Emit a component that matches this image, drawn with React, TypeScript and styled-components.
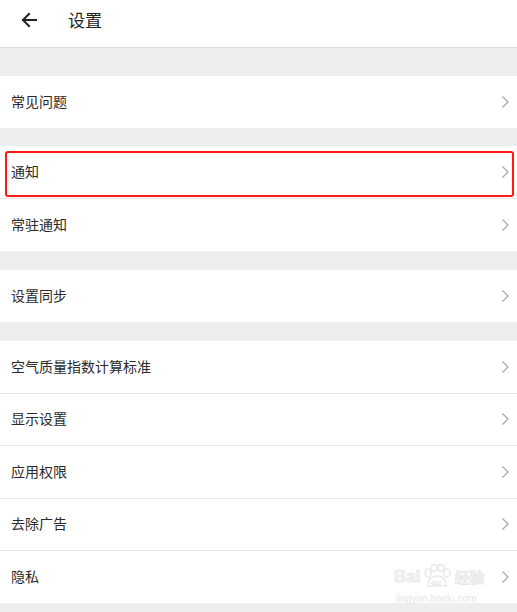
import React from 'react';
import styled, { createGlobalStyle } from 'styled-components';

const GlobalStyle = createGlobalStyle`
  html, body {
    margin: 0;
    padding: 0;
    background: #eeeeee;
    font-family: "Noto Sans CJK SC", "Noto Sans", Roboto, sans-serif;
  }
`;

const groups: { gap: number; items: string[] }[] = [
  { gap: 28, items: ['常见问题'] },
  { gap: 18, items: ['通知', '常驻通知'] },
  { gap: 19, items: ['设置同步'] },
  { gap: 19, items: ['空气质量指数计算标准', '显示设置', '应用权限', '去除广告', '隐私'] },
];

function Chevron() {
  return (
    <svg width='9' height='14' viewBox='0 0 9 14'>
      <path d='M1.5 1.5 L7 7 L1.5 12.5' fill='none' stroke='#a8a8a8' strokeWidth='1.3' />
    </svg>
  );
}

function BackArrow() {
  return (
    <svg width='16' height='16' viewBox='0 0 16 16'>
      <path
        d='M15 8 H2 M8 2 L2 8 L8 14'
        fill='none'
        stroke='#222'
        strokeWidth='2'
        strokeLinecap='square'
      />
    </svg>
  );
}

function Watermark() {
  return (
    <Mark>
      <MarkTop>
        <span>Bai</span>
        <svg width='30' height='26' viewBox='0 0 30 26'>
          <g fill='none' stroke='#e8e8e8' strokeWidth='1.5'>
            <ellipse cx='6' cy='9' rx='3' ry='4' />
            <ellipse cx='12' cy='4' rx='3' ry='3.5' />
            <ellipse cx='19' cy='4' rx='3' ry='3.5' />
            <ellipse cx='25' cy='9' rx='3' ry='4' />
            <path d='M6 22 C6 14 10 12 15 12 C20 12 24 14 24 22 Z' />
          </g>
          <text x='9' y='21' fontSize='8' fill='#e8e8e8' fontFamily='Liberation Sans'>
            du
          </text>
        </svg>
        <span>经验</span>
      </MarkTop>
      <MarkUrl>jingyan.baidu.com</MarkUrl>
    </Mark>
  );
}

export default function App() {
  return (
    <Page>
      <GlobalStyle />
      <Header>
        <BackButton>
          <BackArrow />
        </BackButton>
        <Title>设置</Title>
      </Header>
      {groups.map((group, gi) => (
        <Group key={gi} $gap={group.gap}>
          {group.items.map((label) => (
            <Row key={label}>
              <Label>{label}</Label>
              <Chevron />
              {label === '通知' && <Highlight />}
              {label === '隐私' && <Watermark />}
            </Row>
          ))}
        </Group>
      ))}
    </Page>
  );
}

const Page = styled.div`
  width: 517px;
  height: 612px;
  overflow: hidden;
  background: #eeeeee;
`;

const Header = styled.div`
  display: flex;
  align-items: center;
  height: 47px;
  background: #ffffff;
  border-bottom: 1px solid #dcdcdc;
`;

const BackButton = styled.div`
  display: flex;
  align-items: center;
  padding-left: 21px;
  width: 47px;
  box-sizing: border-box;
  margin-top: -7px;
`;

const Title = styled.div`
  font-size: 17px;
  color: #222;
  margin-left: 21px;
  margin-top: -8px;
`;

const Group = styled.div<{ $gap: number }>`
  margin-top: ${(p) => p.$gap}px;
  background: #ffffff;
`;

const Row = styled.div`
  position: relative;
  display: flex;
  align-items: center;
  justify-content: space-between;
  height: 52px;
  padding: 0 7px 0 11px;
  box-sizing: border-box;

  & + & {
    border-top: 1px solid #e6e6e6;
    height: 52.5px;
  }
`;

const Label = styled.div`
  font-size: 14px;
  color: #2a2a2a;
  padding-bottom: 2px;
`;

const Highlight = styled.div`
  position: absolute;
  left: 5px;
  right: 3px;
  top: 5px;
  bottom: 1px;
  border: 2px solid #ff1a12;
  border-radius: 3px;
  pointer-events: none;
`;

const Mark = styled.div`
  position: absolute;
  left: 394px;
  top: 13px;
  display: flex;
  flex-direction: column;
  align-items: flex-start;
  pointer-events: none;
`;

const MarkTop = styled.div`
  display: flex;
  align-items: center;
  gap: 2px;
  font-family: "Liberation Sans", sans-serif;
  font-size: 17px;
  font-weight: bold;
  color: #f4f4f4;
  -webkit-text-stroke: 0.6px #e4e4e4;
  line-height: 18px;

  span:last-child {
    font-family: "Noto Sans CJK SC", sans-serif;
    font-size: 15px;
  }
`;

const MarkUrl = styled.div`
  font-family: "Liberation Sans", sans-serif;
  font-size: 10px;
  color: #e6e6e6;
  margin-left: 2px;
  margin-top: 3px;
`;
